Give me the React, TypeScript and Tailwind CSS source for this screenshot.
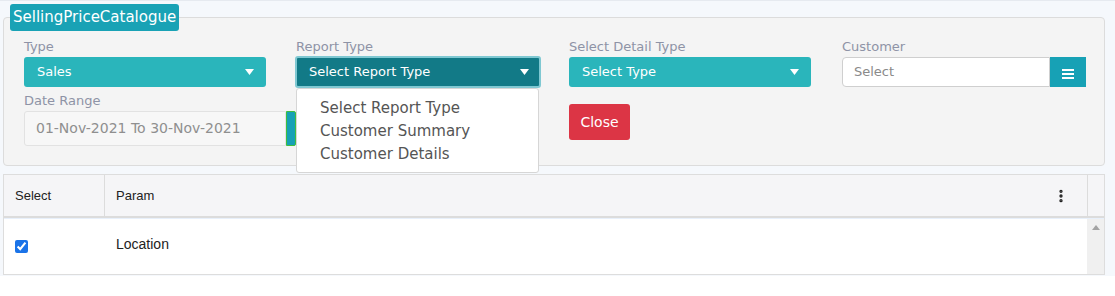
import { MoreVertical } from 'lucide-react';

const poppins = { fontFamily: '"DejaVu Sans", "Noto Sans", sans-serif' };

function Caret() {
  return (
    <svg width="9" height="6" viewBox="0 0 9 6" className="fill-white">
      <path d="M0 0 L9 0 L4.5 6 Z" />
    </svg>
  );
}

function SelectBox({ value, dark }: { value: string; dark?: boolean }) {
  return (
    <div
      className={
        dark
          ? 'flex h-[32px] items-center justify-between rounded-[3px] border-2 border-[#7fc8d2] bg-[#127a87] pl-[12px] pr-[10px] text-[13px] text-white'
          : 'flex h-[30px] items-center justify-between rounded-[3px] bg-[#2ab5bb] pl-[13px] pr-[12px] text-[13px] text-white'
      }
    >
      <span>{value}</span>
      <Caret />
    </div>
  );
}

export default function App() {
  const options = ['Select Report Type', 'Customer Summary', 'Customer Details'];

  return (
    <div className="h-[296px] w-[1115px] overflow-hidden bg-white">
      <div className="h-[276px] border-t border-[#e6eaf0] bg-[#f5f8fc] pl-[3px] pr-[10px] pt-[3px]">
        {/* filter panel */}
        <div className="relative" style={poppins}>
          <div className="relative z-10 ml-[7px] inline-block rounded-[3px] bg-[#19a2b5] px-[3px] py-[4px] text-[15px] leading-[19px] text-white">
            SellingPriceCatalogue
          </div>
          <div className="-mt-[14px] h-[149px] rounded-[4px] border border-[#dcdcdc] bg-[#f4f4f4] px-[20px] pt-[20px]">
            <div className="grid grid-cols-[272px_273px_273px_244px]">
              <div className="pr-[30px]">
                <div className="mb-[2px] text-[13px] leading-[17px] text-[#8e93a6]">Type</div>
                <SelectBox value="Sales" />
              </div>
              <div className="relative pr-[28px]">
                <div className="mb-[1px] text-[13px] leading-[17px] text-[#8e93a6]">Report Type</div>
                <div className="-ml-[1px]">
                  <SelectBox value="Select Report Type" dark />
                </div>
                <div className="absolute left-0 top-[50px] z-20 w-[243px] rounded-[3px] border border-[#d6d6d6] bg-white pb-[6px] pl-[23px] pt-[8px] text-[15px] leading-[23px] text-[#555555]">
                  {options.map((o) => (
                    <div key={o}>{o}</div>
                  ))}
                </div>
              </div>
              <div className="pr-[31px]">
                <div className="mb-[2px] text-[13px] leading-[17px] text-[#8e93a6]">Select Detail Type</div>
                <SelectBox value="Select Type" />
              </div>
              <div>
                <div className="mb-[2px] text-[13px] leading-[17px] text-[#8e93a6]">Customer</div>
                <div className="flex h-[30px]">
                  <div className="flex flex-1 items-center rounded-l-[4px] border border-[#cfcfcf] bg-white pl-[11px] text-[13px] text-[#8a8a8a]">
                    Select
                  </div>
                  <div className="flex w-[36px] items-center justify-center bg-[#17a1b5]">
                    <div className="flex flex-col gap-[2px] pt-[4px]">
                      <span className="block h-[2px] w-[12px] bg-white" />
                      <span className="block h-[2px] w-[12px] bg-white" />
                      <span className="block h-[2px] w-[12px] bg-white" />
                    </div>
                  </div>
                </div>
              </div>
            </div>
            <div className="grid grid-cols-[272px_273px_273px_244px]">
              <div className="pt-[4px]">
                <div className="mb-[2px] text-[13px] leading-[17px] text-[#8e93a6]">Date Range</div>
                <div className="flex h-[35px]">
                  <div className="flex w-[265px] items-center rounded-l-[3px] border border-[#e2e2e2] bg-[#f7f7f7] pl-[11px] text-[14px] text-[#8f8f8f]">
                    01-Nov-2021 To 30-Nov-2021
                  </div>
                  <div className="w-[10px] rounded-r-[2px] border border-[#3fbf3f] bg-[#17a1b5]" />
                </div>
              </div>
              <div />
              <div className="pt-[16px]">
                <div className="flex h-[36px] w-[61px] items-center justify-center rounded-[3px] bg-[#dc3545] text-[14px] text-white">
                  Close
                </div>
              </div>
              <div />
            </div>
          </div>
        </div>

        {/* table */}
        <div className="mt-[8px] border border-[#dddddd] bg-white" style={{ fontFamily: '"Liberation Sans", Arial, sans-serif' }}>
          <div className="flex h-[43px] border-b-2 border-[#dcdcdc] bg-[#f5f5f7] text-[13px] text-[#222]">
            <div className="flex w-[101px] items-center border-r border-[#dcdcdc] pl-[11px]">Select</div>
            <div className="flex flex-1 items-center justify-between border-r border-[#dcdcdc] pl-[11px] pr-[18px]">
              <span>Param</span>
              <MoreVertical className="h-[16px] w-[16px] text-[#222]" strokeWidth={3} />
            </div>
            <div className="w-[16px]" />
          </div>
          <div className="flex h-[56px] border-t border-[#e8f0fb]">
            <div className="flex flex-1">
              <div className="w-[101px] pl-[11px] pt-[17px]">
                <input type="checkbox" defaultChecked className="h-[13px] w-[13px] accent-[#1a73e8]" />
              </div>
              <div className="pl-[11px] pt-[15px] text-[14px] text-[#222]">Location</div>
            </div>
            <div className="flex w-[17px] justify-center bg-[#f0f0f0] pt-[6px]">
              <svg width="8" height="5" viewBox="0 0 8 5" className="fill-[#a3a3a3]">
                <path d="M0 5 L4 0 L8 5 Z" />
              </svg>
            </div>
          </div>
        </div>
      </div>
    </div>
  );
}
